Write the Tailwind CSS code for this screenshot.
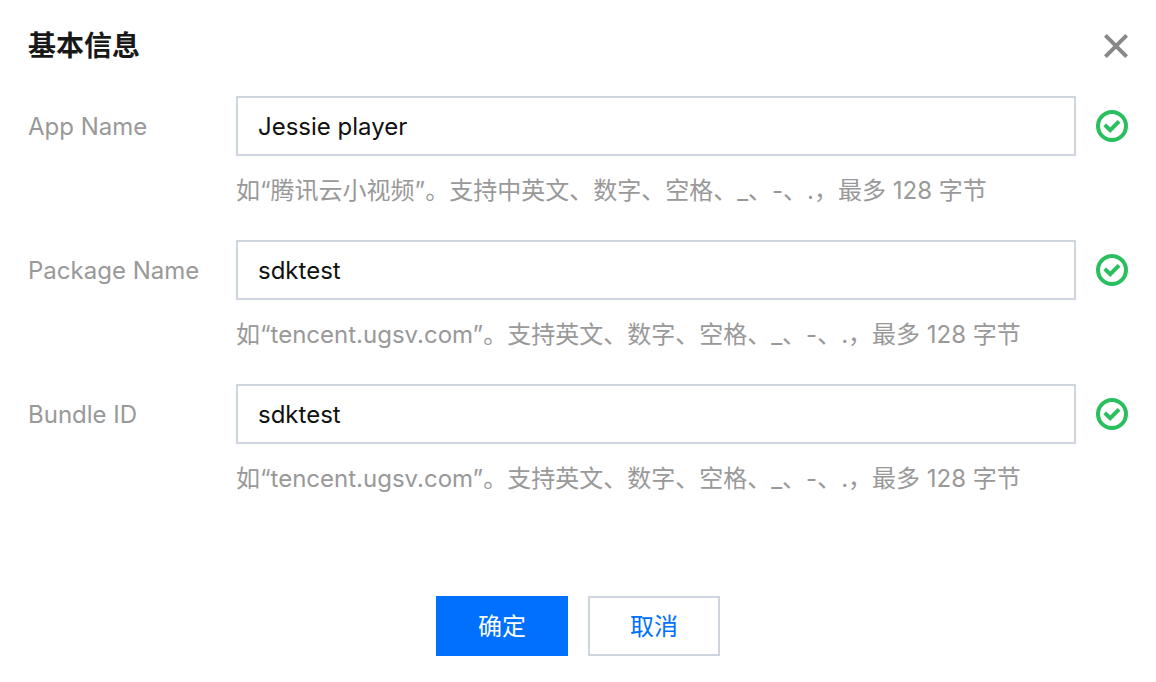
<!DOCTYPE html>
<html lang="zh-CN">
<head>
  <meta charset="UTF-8">
  <meta name="viewport" content="width=device-width, initial-scale=1">
  <title>基本信息</title>
  <script src="https://cdn.jsdelivr.net/npm/@tailwindcss/browser@4"></script>
</head>
<body class="bg-white font-[Inter,'Noto_Sans_CJK_SC',sans-serif] text-2xl text-[#111111]">
  <svg class="hidden">
    <symbol id="icon-success" viewBox="0 0 32 32" fill="none" stroke="currentColor" stroke-width="4">
      <circle cx="16" cy="16" r="14" />
      <path d="M8.8 14.8l5.4 5.4 8.8-8.8" />
    </symbol>
  </svg>

  <div role="dialog" aria-labelledby="dialog-title" class="px-7 pt-7 pb-6">
    <div class="flex items-center justify-between mb-8">
      <h1 id="dialog-title" class="text-[28px] leading-9 font-bold text-[#181818]">基本信息</h1>
      <button type="button" aria-label="关闭" class="text-[#888888]">
        <svg class="size-6" viewBox="0 0 24 24" fill="none" stroke="currentColor" stroke-width="4">
          <path d="M1.4 1.4l21.2 21.2M22.6 1.4L1.4 22.6" />
        </svg>
      </button>
    </div>

    <form>
      <div class="flex flex-col gap-[30px]">
        <div class="flex">
          <label for="app-name" class="w-52 shrink-0 leading-[62px] text-[#999999]">App Name</label>
          <div class="grow">
            <div class="flex items-center gap-5">
              <input id="app-name" type="text" value="Jessie player" class="min-w-0 grow h-[60px] border-2 border-[#cfd5de] px-5">
              <svg class="size-8 shrink-0 text-[#29bf5f]"><use href="#icon-success" /></svg>
            </div>
            <p class="mt-4 leading-[38px] text-[#999999]">如“腾讯云小视频”。支持中英文、数字、空格、_、-、.，最多 128 字节</p>
          </div>
        </div>

        <div class="flex">
          <label for="package-name" class="w-52 shrink-0 leading-[62px] text-[#999999]">Package Name</label>
          <div class="grow">
            <div class="flex items-center gap-5">
              <input id="package-name" type="text" value="sdktest" class="min-w-0 grow h-[60px] border-2 border-[#cfd5de] px-5">
              <svg class="size-8 shrink-0 text-[#29bf5f]"><use href="#icon-success" /></svg>
            </div>
            <p class="mt-4 leading-[38px] text-[#999999]">如“tencent.ugsv.com”。支持英文、数字、空格、_、-、.，最多 128 字节</p>
          </div>
        </div>

        <div class="flex">
          <label for="bundle-id" class="w-52 shrink-0 leading-[62px] text-[#999999]">Bundle ID</label>
          <div class="grow">
            <div class="flex items-center gap-5">
              <input id="bundle-id" type="text" value="sdktest" class="min-w-0 grow h-[60px] border-2 border-[#cfd5de] px-5">
              <svg class="size-8 shrink-0 text-[#29bf5f]"><use href="#icon-success" /></svg>
            </div>
            <p class="mt-4 leading-[38px] text-[#999999]">如“tencent.ugsv.com”。支持英文、数字、空格、_、-、.，最多 128 字节</p>
          </div>
        </div>
      </div>

      <div class="mt-[98px] flex justify-center gap-5">
        <button type="submit" class="h-[60px] w-33 pt-0.5 bg-[#0071ff] text-white">确定</button>
        <button type="button" class="h-[60px] w-33 pt-0.5 border-2 border-[#cfd5de] text-[#0071ff]">取消</button>
      </div>
    </form>
  </div>
</body>
</html>
